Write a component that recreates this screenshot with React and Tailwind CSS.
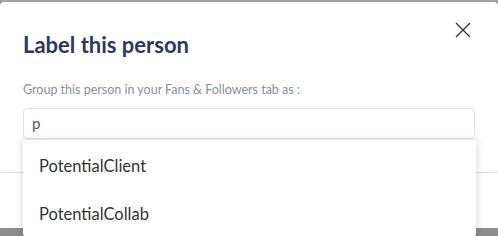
import React from "react";

const options = ["PotentialClient", "PotentialCollab"];

export default function App() {
  return (
    <div
      className="relative w-[498px] h-[236px] overflow-hidden bg-[#8e8e8e] pt-[2px]"
      style={{ fontFamily: "Lato, 'Open Sans', sans-serif" }}
    >
      {/* backdrop strip at top */}
      <div className="absolute left-0 top-0 h-[2px] w-full bg-[#a2a2a2]" />

      {/* modal */}
      <div className="relative h-[226px] rounded-t-[4px] bg-white">
        <button className="absolute right-[27px] top-[20px] flex h-[16px] w-[16px] items-center justify-center text-[#333]">
          <svg width="16" height="16" viewBox="0 0 16 16" fill="none">
            <path d="M1 1L15 15M15 1L1 15" stroke="currentColor" strokeWidth="1.3" />
          </svg>
        </button>

        <div className="px-[23px] pt-[29px]">
          <h2 className="text-[22px] leading-[28px] font-bold text-[#2b3a58]">
            Label this person
          </h2>
          <p className="mt-[23px] text-[12.5px] leading-[16px] text-[#8690a3]">
            Group this person in your Fans &amp; Followers tab as :
          </p>

          <div className="relative mt-[10px]">
            <div className="flex h-[31px] items-center rounded-[4px] border border-[#dfe4ea] px-[8px] text-[15px] text-[#4b5876]">
              p
            </div>

            {/* suggestions */}
            <div className="absolute left-0 top-full z-10 w-[453px] rounded-b-[5px] border-t border-[#e4e4e4] bg-white pt-[2px] shadow-[0_3px_10px_rgba(0,0,0,0.18)]">
              {options.map((opt) => (
                <div
                  key={opt}
                  className="flex h-[48px] items-center px-[16px] text-[16.5px] text-[#333]"
                >
                  {opt}
                </div>
              ))}
            </div>
          </div>
        </div>

        <div className="mt-[33px] h-px w-full bg-[#dde3ea]" />
      </div>
    </div>
  );
}
